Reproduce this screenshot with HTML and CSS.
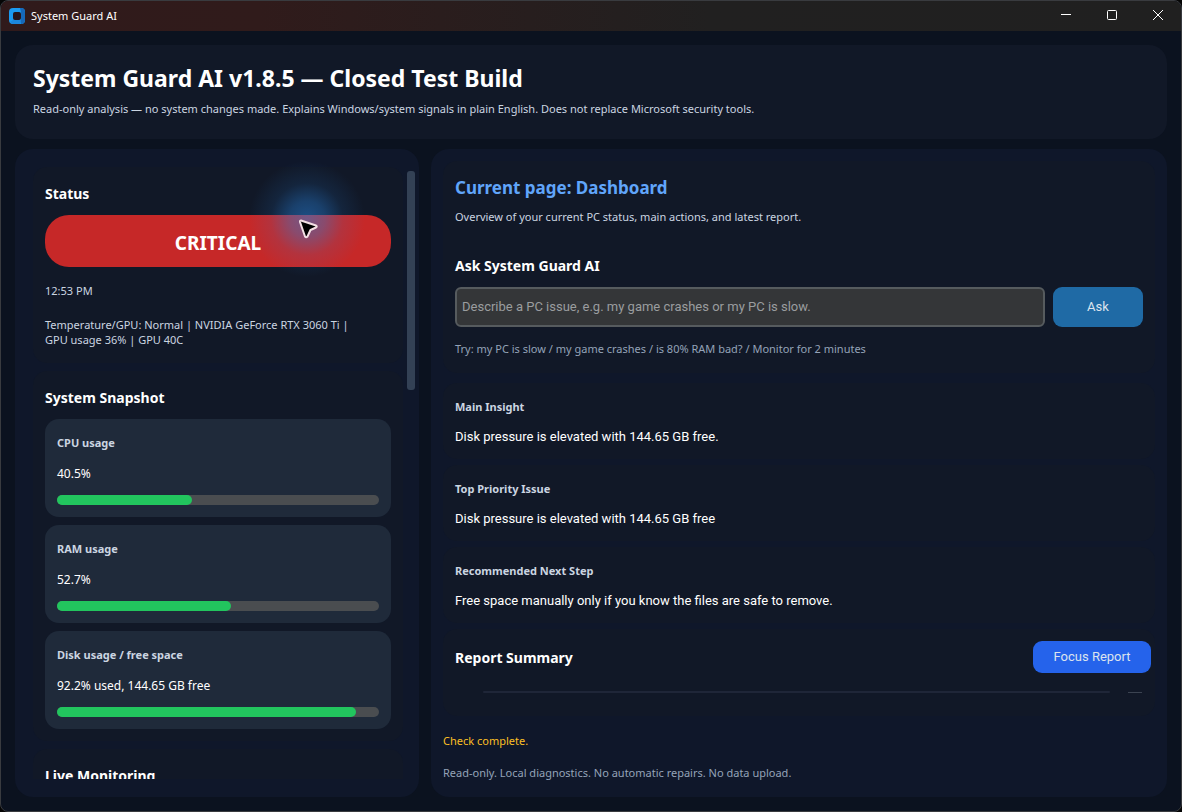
FILE: index.html
```
<!DOCTYPE html>
<html lang="en">
<head>
  <meta charset="UTF-8">
  <meta name="viewport" content="width=device-width, initial-scale=1.0">
  <title>System Guard AI</title>
  <link rel="stylesheet" href="styles.css">
</head>
<body>
  <div class="window">
    <div class="titlebar">
      <svg class="app-icon" width="16" height="16" viewBox="0 0 16 16">
        <rect width="16" height="16" rx="4" fill="#1b9af0"/>
        <path fill="#1668b8" d="M11 0h1q4 0 4 4v8q0 4-4 4l-1-4h1V4z"/>
        <path fill="#1b86dc" d="M1 14l3-2h8l-1 4H4q-2 0-3-2z"/>
        <rect x="4" y="4" width="8" height="8" rx="2" fill="#26161c"/>
      </svg>
      <span class="app-name">System Guard AI</span>
      <div class="window-buttons">
        <button type="button" aria-label="Minimize">
          <svg width="10" height="10" viewBox="0 0 10 10"><path d="M0 4.500h10"/></svg>
        </button>
        <button type="button" aria-label="Maximize">
          <svg width="10" height="10" viewBox="0 0 10 10"><rect x=".5" y=".5" width="9" height="9" rx="1"/></svg>
        </button>
        <button type="button" aria-label="Close">
          <svg width="10" height="10" viewBox="0 0 10 10"><path d="M0 0l10 10M10 0L0 10"/></svg>
        </button>
      </div>
    </div>

    <div class="app">
      <header class="header">
        <h1>System Guard AI v1.8.5 — Closed Test Build</h1>
        <p>Read-only analysis — no system changes made. Explains Windows/system signals in plain English. Does not replace Microsoft security tools.</p>
      </header>

      <div class="columns">
        <aside class="panel sidebar">
          <div class="scroll-area">
            <section class="card side-card">
              <h2>Status</h2>
              <div class="status-pill">CRITICAL</div>
              <p class="status-time">12:53 PM</p>
              <p class="status-detail">Temperature/GPU: Normal | NVIDIA GeForce RTX 3060 Ti | GPU usage 36% | GPU 40C</p>
            </section>

            <section class="card side-card">
              <h2>System Snapshot</h2>
              <div class="meter">
                <h3>CPU usage</h3>
                <p>40.5%</p>
                <div class="bar"><div class="bar-fill" style="width: 42%"></div></div>
              </div>
              <div class="meter">
                <h3>RAM usage</h3>
                <p>52.7%</p>
                <div class="bar"><div class="bar-fill" style="width: 54%"></div></div>
              </div>
              <div class="meter">
                <h3>Disk usage / free space</h3>
                <p>92.2% used, 144.65 GB free</p>
                <div class="bar"><div class="bar-fill" style="width: 93%"></div></div>
              </div>
            </section>

            <section class="card side-card">
              <h2>Live Monitoring</h2>
            </section>
          </div>
          <div class="scrollbar"><div class="scroll-thumb"></div></div>
        </aside>

        <main class="panel content">
          <section class="card ask-card">
            <h2 class="page-title">Current page: Dashboard</h2>
            <p class="page-text">Overview of your current PC status, main actions, and latest report.</p>
            <label class="ask-label" for="ask-input">Ask System Guard AI</label>
            <form class="ask-form">
              <input type="text" id="ask-input" placeholder="Describe a PC issue, e.g. my game crashes or my PC is slow.">
              <button type="button">Ask</button>
            </form>
            <p class="hint">Try: my PC is slow / my game crashes / is 80% RAM bad? / Monitor for 2 minutes</p>
          </section>

          <section class="card insight">
            <h3>Main Insight</h3>
            <p>Disk pressure is elevated with 144.65 GB free.</p>
          </section>
          <section class="card insight">
            <h3>Top Priority Issue</h3>
            <p>Disk pressure is elevated with 144.65 GB free</p>
          </section>
          <section class="card insight">
            <h3>Recommended Next Step</h3>
            <p>Free space manually only if you know the files are safe to remove.</p>
          </section>

          <section class="card report">
            <div class="report-head">
              <h2>Report Summary</h2>
              <button type="button">Focus Report</button>
            </div>
            <div class="report-box">
              <div class="report-line"></div>
              <div class="report-end"></div>
            </div>
          </section>

          <p class="check">Check complete.</p>
          <p class="footnote">Read-only. Local diagnostics. No automatic repairs. No data upload.</p>
        </main>
      </div>
    </div>

    <div class="glow"></div>
    <svg class="cursor" width="22" height="22" viewBox="0 0 22 22">
      <path d="M3 2.500L18 7.500Q19.500 8.500 18 9.500L12.500 12L9.500 18.500Q8 20 7 18.500L2 4Q1.800 2.500 3 2.500z" fill="#000" stroke="#f3dfe4" stroke-width="2" stroke-linejoin="round"/>
    </svg>
  </div>
</body>
</html>
```
FILE: styles.css
```
* {
  margin: 0;
  padding: 0;
  box-sizing: border-box;
}
body {
  font-family: "Noto Sans", "Open Sans", sans-serif;
  font-size: 11px;
  line-height: 16px;
  background: #050505;
  color: #fff;
}
.window {
  position: relative;
  display: flex;
  flex-direction: column;
  height: 100vh;
  border: 1px solid #393b3f;
  border-radius: 8px;
  background: #0b121f;
  overflow: hidden;
}
.titlebar {
  display: flex;
  align-items: center;
  flex: 0 0 30px;
  padding-left: 8px;
  background: linear-gradient(90deg, #301a1b 0%, #301b1b 22%, #212020 60%, #202020 100%);
}
.app-name {
  margin-left: 6px;
}
.window-buttons {
  display: flex;
  margin-left: auto;
}
.window-buttons button {
  display: flex;
  align-items: center;
  justify-content: center;
  width: 46px;
  height: 30px;
  border: none;
  background: none;
}
.window-buttons svg {
  fill: none;
  stroke: #fff;
  stroke-width: 1;
}
.app {
  display: flex;
  flex-direction: column;
  flex: 1;
  min-height: 0;
  gap: 10px;
  padding: 14px;
}
.header {
  padding: 15px 18px 21px;
  border-radius: 18px;
  background: #111827;
}
h1 {
  font-size: 23px;
  line-height: 36px;
  font-weight: 700;
}
.header p {
  margin-top: 4px;
  line-height: 18px;
  color: #cbd5e1;
}
h2,
.ask-label {
  font-size: 14px;
  line-height: 20px;
  font-weight: 700;
}
h3 {
  font-size: 11px;
  line-height: 16px;
  font-weight: 700;
  color: #cbd5e1;
}
.columns {
  display: grid;
  grid-template-columns: 404px minmax(0, 1fr);
  gap: 12px;
  flex: 1;
  min-height: 0;
}
.panel {
  min-height: 0;
  border-radius: 18px;
  background: #0f172a;
}
.card {
  border-radius: 14px;
  background: #111827;
}

/* left column */
.sidebar {
  display: flex;
  gap: 4px;
  padding: 18px 4px 18px 18px;
}
.scroll-area {
  display: flex;
  flex-direction: column;
  gap: 8px;
  flex: 1;
  overflow: hidden;
}
.side-card {
  flex: none;
  padding: 17px 12px 12px;
}
.side-card h2 {
  margin-bottom: 11px;
}
.status-pill {
  padding: 15px 0 11px;
  border-radius: 24px;
  background: #c62828;
  font-size: 19px;
  line-height: 26px;
  font-weight: 700;
  text-align: center;
}
.status-time {
  margin-top: 16px;
  color: #cbd5e1;
}
.status-detail {
  margin-top: 18px;
  padding-right: 24px;
  padding-bottom: 4px;
  line-height: 15px;
  color: #cbd5e1;
}
.meter {
  padding: 16px 12px 12px;
  border-radius: 14px;
  background: #1f2a3a;
}
.meter + .meter {
  margin-top: 8px;
}
.meter p {
  margin: 15px 0 13px;
  font-size: 12px;
}
.bar {
  height: 10px;
  border-radius: 5px;
  background: #4a4d50;
}
.bar-fill {
  height: 10px;
  border-radius: 5px;
  background: #22c55e;
}
.scrollbar {
  width: 8px;
  padding-top: 4px;
}
.scroll-thumb {
  height: 36%;
  border-radius: 3px;
  background: #334155;
}

/* right column */
.content {
  display: flex;
  flex-direction: column;
  gap: 6px;
  padding: 12px;
}
.ask-card {
  padding: 14px 12px 16px;
  margin-bottom: 4px;
}
.page-title {
  font-size: 17px;
  line-height: 26px;
  color: #60a5fa;
}
.page-text {
  margin-top: 8px;
  color: #cbd5e1;
}
.ask-label {
  display: block;
  margin-top: 31px;
}
.ask-form {
  display: flex;
  gap: 8px;
  margin-top: 11px;
}
.ask-form input {
  flex: 1;
  min-width: 0;
  height: 40px;
  padding: 0 5px 2px;
  border: 2px solid #565b5e;
  border-radius: 6px;
  background: #343638;
  color: #dce4ee;
  font-family: Roboto, sans-serif;
  font-size: 13px;
}
.ask-form input::placeholder {
  color: #9a9d9f;
}
button {
  padding-bottom: 2px;
  color: #dce4ee;
  font-family: Roboto, sans-serif;
  font-size: 13px;
  cursor: pointer;
}
.ask-form button {
  width: 90px;
  border: none;
  border-radius: 9px;
  background: #1f6aa5;
}
.hint {
  margin-top: 14px;
  color: #94a3b8;
}
.insight {
  padding: 16px 12px 14px;
}
.insight p {
  margin-top: 14px;
  font-family: Roboto, sans-serif;
  font-size: 13px;
}
.report {
  padding: 12px 4px 23px 12px;
}
.report-head {
  display: flex;
  align-items: center;
  justify-content: space-between;
}
.report-head h2 {
  padding-top: 2px;
}
.report-head button {
  width: 118px;
  height: 32px;
  border: none;
  border-radius: 9px;
  background: #2563eb;
}
.report-box {
  display: flex;
  gap: 18px;
  padding: 18px 9px 0 28px;
}
.report-line {
  flex: 1;
  height: 2px;
  border-radius: 2px;
  background: #1f2638;
}
.report-end {
  width: 14px;
  height: 1px;
  margin-top: 1px;
  background: #3b4351;
}
.check {
  margin-top: 11px;
  color: #fbbf24;
}
.footnote {
  margin-top: 10px;
  color: #94a3b8;
}

/* mouse pointer and its glow */
.glow {
  position: absolute;
  left: 246px;
  top: 158px;
  width: 120px;
  height: 120px;
  background: radial-gradient(circle, rgba(40, 130, 220, 0.52) 0, rgba(40, 130, 220, 0.38) 18px, rgba(40, 130, 220, 0.12) 36px, transparent 58px);
  pointer-events: none;
}
.cursor {
  position: absolute;
  left: 297px;
  top: 217px;
  pointer-events: none;
}
```
